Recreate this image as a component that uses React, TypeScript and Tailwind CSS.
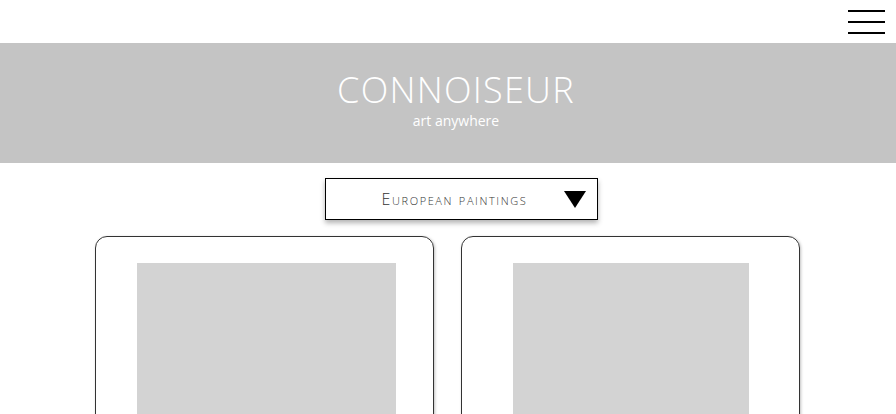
import React from "react";

export default function App() {
    return (
        <div className="w-full min-h-screen bg-white overflow-hidden font-['Open_Sans',sans-serif]">
            <div className="h-[43px] flex items-center justify-end pr-[11px]">
                <button type="button" className="w-[37px] flex flex-col gap-[9px] pt-[1px]">
                    <span className="block h-[2px] bg-black" />
                    <span className="block h-[2px] bg-black" />
                    <span className="block h-[2px] bg-black" />
                </button>
            </div>

            <div className="h-[120px] bg-[#c4c4c4] flex flex-col items-center pt-[27px] pl-[16px]">
                <h1 className="text-[36px] leading-[40px] font-light text-white tracking-[0.035em]">CONNOISEUR</h1>
                <p className="text-[14px] leading-[18px] text-white mt-[2px]">art anywhere</p>
            </div>

            <div className="flex justify-center pl-[27px] mt-[15px]">
                <div className="w-[273px] h-[42px] border border-black bg-white shadow-[0_3px_5px_rgba(0,0,0,0.3)] flex items-center relative">
                    <span className="flex-1 text-center text-[16px] font-light text-[#333] [font-variant:small-caps] tracking-[0.1em] pr-[14px]">European paintings</span>
                    <svg width="22" height="17" viewBox="0 0 22 17" className="absolute right-[11px] top-[12px]">
                        <polygon points="0,0 22,0 11,17" fill="#000" />
                    </svg>
                </div>
            </div>

            <div className="flex justify-center gap-[27px] mt-[16px] pr-[1px]">
                <div className="w-[339px] h-[300px] border border-[#333] rounded-[12px] shadow-[1px_1px_3px_rgba(0,0,0,0.25)] flex justify-center pt-[26px] pl-[4px]">
                    <div className="w-[259px] h-[260px] bg-[#d3d3d3]" />
                </div>
                <div className="w-[339px] h-[300px] border border-[#333] rounded-[12px] shadow-[1px_1px_3px_rgba(0,0,0,0.25)] flex justify-center pt-[26px] pl-[1px]">
                    <div className="w-[236px] h-[260px] bg-[#d3d3d3]" />
                </div>
            </div>
        </div>
    );
}
